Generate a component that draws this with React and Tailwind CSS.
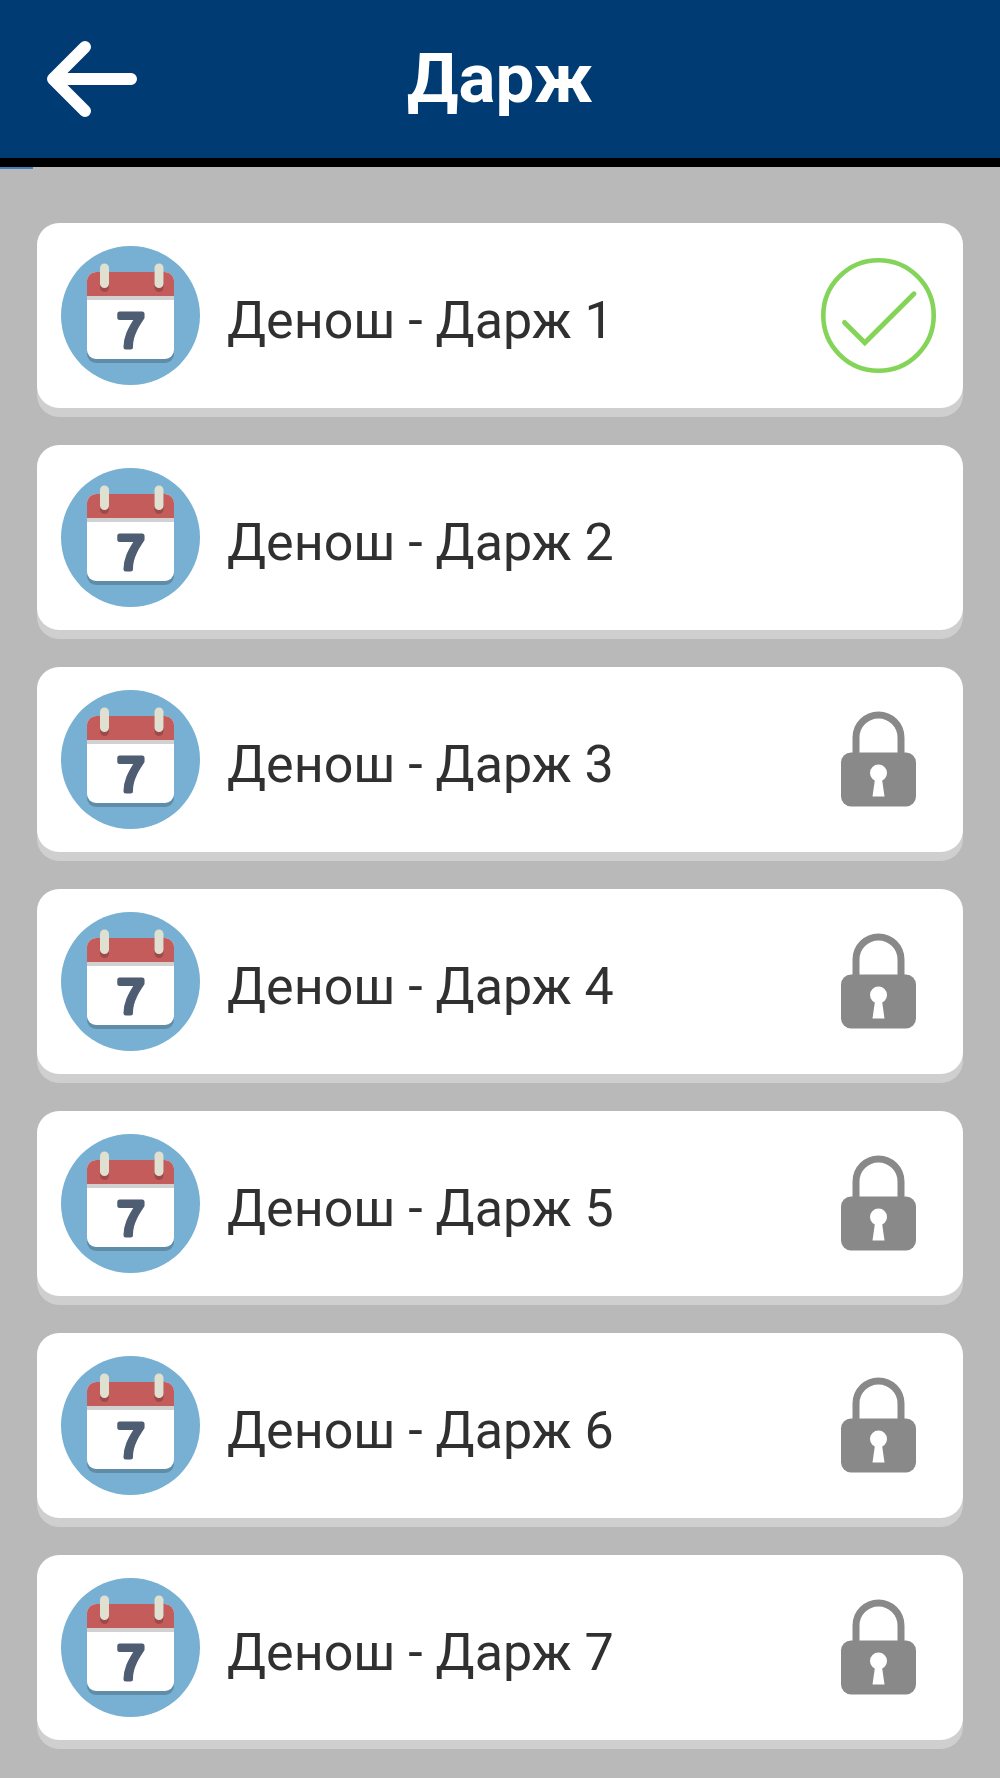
import React from 'react';

const LESSONS = [
  { id: 1, status: 'done' },
  { id: 2, status: 'open' },
  { id: 3, status: 'locked' },
  { id: 4, status: 'locked' },
  { id: 5, status: 'locked' },
  { id: 6, status: 'locked' },
  { id: 7, status: 'locked' },
];

const BackArrow = () => (
  <svg width="90" height="76" viewBox="0 0 90 76" fill="none" aria-hidden="true">
    <path
      d="M38 6 6 38l32 32M8 38h76"
      stroke="#fff"
      strokeWidth="12"
      strokeLinecap="round"
      strokeLinejoin="round"
    />
  </svg>
);

const CalendarIcon = () => (
  <svg className="shrink-0" width="139" height="139" viewBox="0 0 139 139" aria-hidden="true">
    <circle cx="69.5" cy="69.5" r="69.5" fill="#77b0d2" />
    <rect x="26" y="34" width="87" height="83" rx="9" fill="#5f8da8" />
    <rect x="26" y="26" width="87" height="87" rx="9" fill="#fff" />
    <path d="M26 50V35a9 9 0 0 1 9-9h69a9 9 0 0 1 9 9v15z" fill="#c55c5c" />
    <rect x="26" y="50" width="87" height="4" fill="#d1d1d1" />
    <rect x="39" y="22" width="9" height="24" rx="4.5" fill="#9e4a4a" />
    <rect x="93.5" y="22" width="9" height="24" rx="4.5" fill="#9e4a4a" />
    <rect x="39" y="17.5" width="9" height="24.5" rx="4.5" fill="#e0e0d1" />
    <rect x="93.5" y="17.5" width="9" height="24.5" rx="4.5" fill="#e0e0d1" />
    <text
      x="70"
      y="101"
      textAnchor="middle"
      fontFamily="'Liberation Sans', Arial, sans-serif"
      fontSize="49"
      fill="#4f5d73"
      stroke="#4f5d73"
      strokeWidth="5"
      strokeLinejoin="round"
    >
      7
    </text>
  </svg>
);

const CheckIcon = () => (
  <svg width="115" height="115" viewBox="0 0 115 115" fill="none" aria-hidden="true">
    <circle cx="57.5" cy="57.5" r="55.2" stroke="#84d45a" strokeWidth="4.6" />
    <path d="M23.5 64.5 43.8 84.8 93 35.8" stroke="#84d45a" strokeWidth="5" strokeLinecap="round" />
  </svg>
);

const LockIcon = () => (
  <svg width="115" height="115" viewBox="0 0 115 115" fill="none" aria-hidden="true">
    <path d="M35 54V35.5a22.5 22.5 0 0 1 45 0V54" stroke="#898989" strokeWidth="7" />
    <rect x="20" y="50.5" width="75" height="54" rx="10" fill="#898989" />
    <circle cx="57.5" cy="71" r="8.5" fill="#fff" />
    <path d="M54 77h7l2.500 17.500h-12z" fill="#fff" />
  </svg>
);

const LessonCard = ({ id, status }) => (
  <button
    type="button"
    disabled={status === 'locked'}
    className="flex w-full items-center rounded-[22px] bg-white py-[23px] pl-6 pr-[27px] text-left shadow-[0_9px_0_#cfcfcf]"
  >
    <CalendarIcon />
    <span className="ml-[27px] mt-[10px] flex-1 text-[52px] leading-[60px] text-[#303030]">Денош - Дарж {id}</span>
    {status === 'done' && <CheckIcon />}
    {status === 'locked' && <LockIcon />}
  </button>
);

export default function App() {
  return (
    <div className="min-h-screen bg-[#b9b9b9] font-['Roboto',sans-serif]">
      <header className="grid grid-cols-[1fr_auto_1fr] items-center border-b-[9px] border-black bg-[#003c73] px-[47px] py-[39px]">
        <button type="button" aria-label="Back" className="justify-self-start">
          <BackArrow />
        </button>
        <h1 className="text-[69px] font-bold leading-[80px] text-white">Дарж</h1>
      </header>
      <div className="h-[2px] w-[33px] bg-[#3f80bd]" />

      <main className="px-[37px] pb-7 pt-[54px]">
        <ul className="flex flex-col gap-[37px]">
          {LESSONS.map((lesson) => (
            <li key={lesson.id}>
              <LessonCard id={lesson.id} status={lesson.status} />
            </li>
          ))}
        </ul>
      </main>
    </div>
  );
}
